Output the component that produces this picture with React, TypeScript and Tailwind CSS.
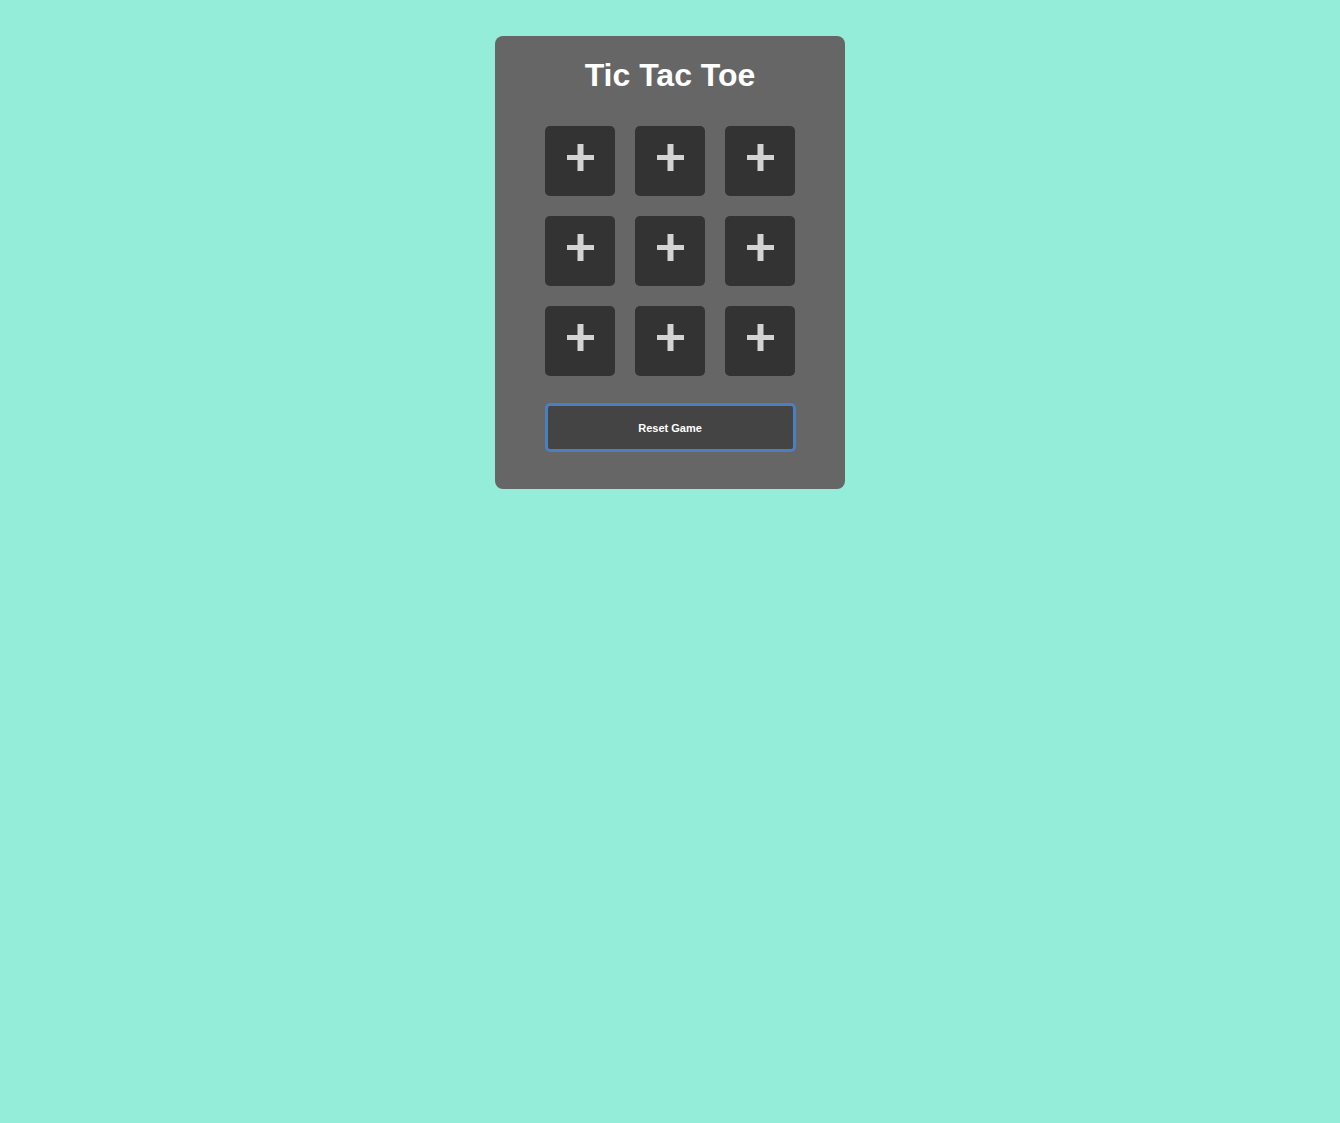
import React, { useState } from "react";

const font = { fontFamily: '"Liberation Sans", Arial, sans-serif' };

function Cell({ value, onClick }: { value: string; onClick: () => void }) {
  return (
    <div
      onClick={onClick}
      className="w-[70px] h-[70px] bg-[#333333] rounded-[5px] flex items-center justify-center cursor-pointer"
    >
      {value ? (
        <span className="text-[#d3d3d3] text-[36px] font-bold">{value}</span>
      ) : (
        <svg width="27" height="27" viewBox="0 0 27 27" className="-mt-[7px]">
          <rect x="10.5" y="0" width="6" height="27" fill="#d3d3d3" />
          <rect x="0" y="11" width="27" height="5" fill="#d3d3d3" />
        </svg>
      )}
    </div>
  );
}

export default function App() {
  const [board, setBoard] = useState<string[]>(Array(9).fill(""));
  const [turn, setTurn] = useState("X");

  return (
    <div
      className="min-h-screen w-full bg-[#94edd9] flex justify-center items-start pt-[36px]"
      style={font}
    >
      <div className="w-[350px] bg-[#666666] rounded-[8px] pt-[21px] pb-[37px] flex flex-col items-center">
        <h1 className="text-white text-[32px] font-bold leading-[37px]">
          Tic Tac Toe
        </h1>
        <div className="grid grid-cols-3 gap-[20px] mt-[32px]">
          {board.map((v, i) => (
            <Cell
              key={i}
              value={v}
              onClick={() => {
                if (v) return;
                const next = [...board];
                next[i] = turn;
                setBoard(next);
                setTurn(turn === "X" ? "O" : "X");
              }}
            />
          ))}
        </div>
        <button
          onClick={() => {
            setBoard(Array(9).fill(""));
            setTurn("X");
          }}
          className="mt-[27px] w-[251px] h-[49px] pt-[2px] bg-[#444444] border-[3px] border-[#4b7fbf] rounded-[5px] text-white text-[11px] font-bold"
        >
          Reset Game
        </button>
      </div>
    </div>
  );
}
